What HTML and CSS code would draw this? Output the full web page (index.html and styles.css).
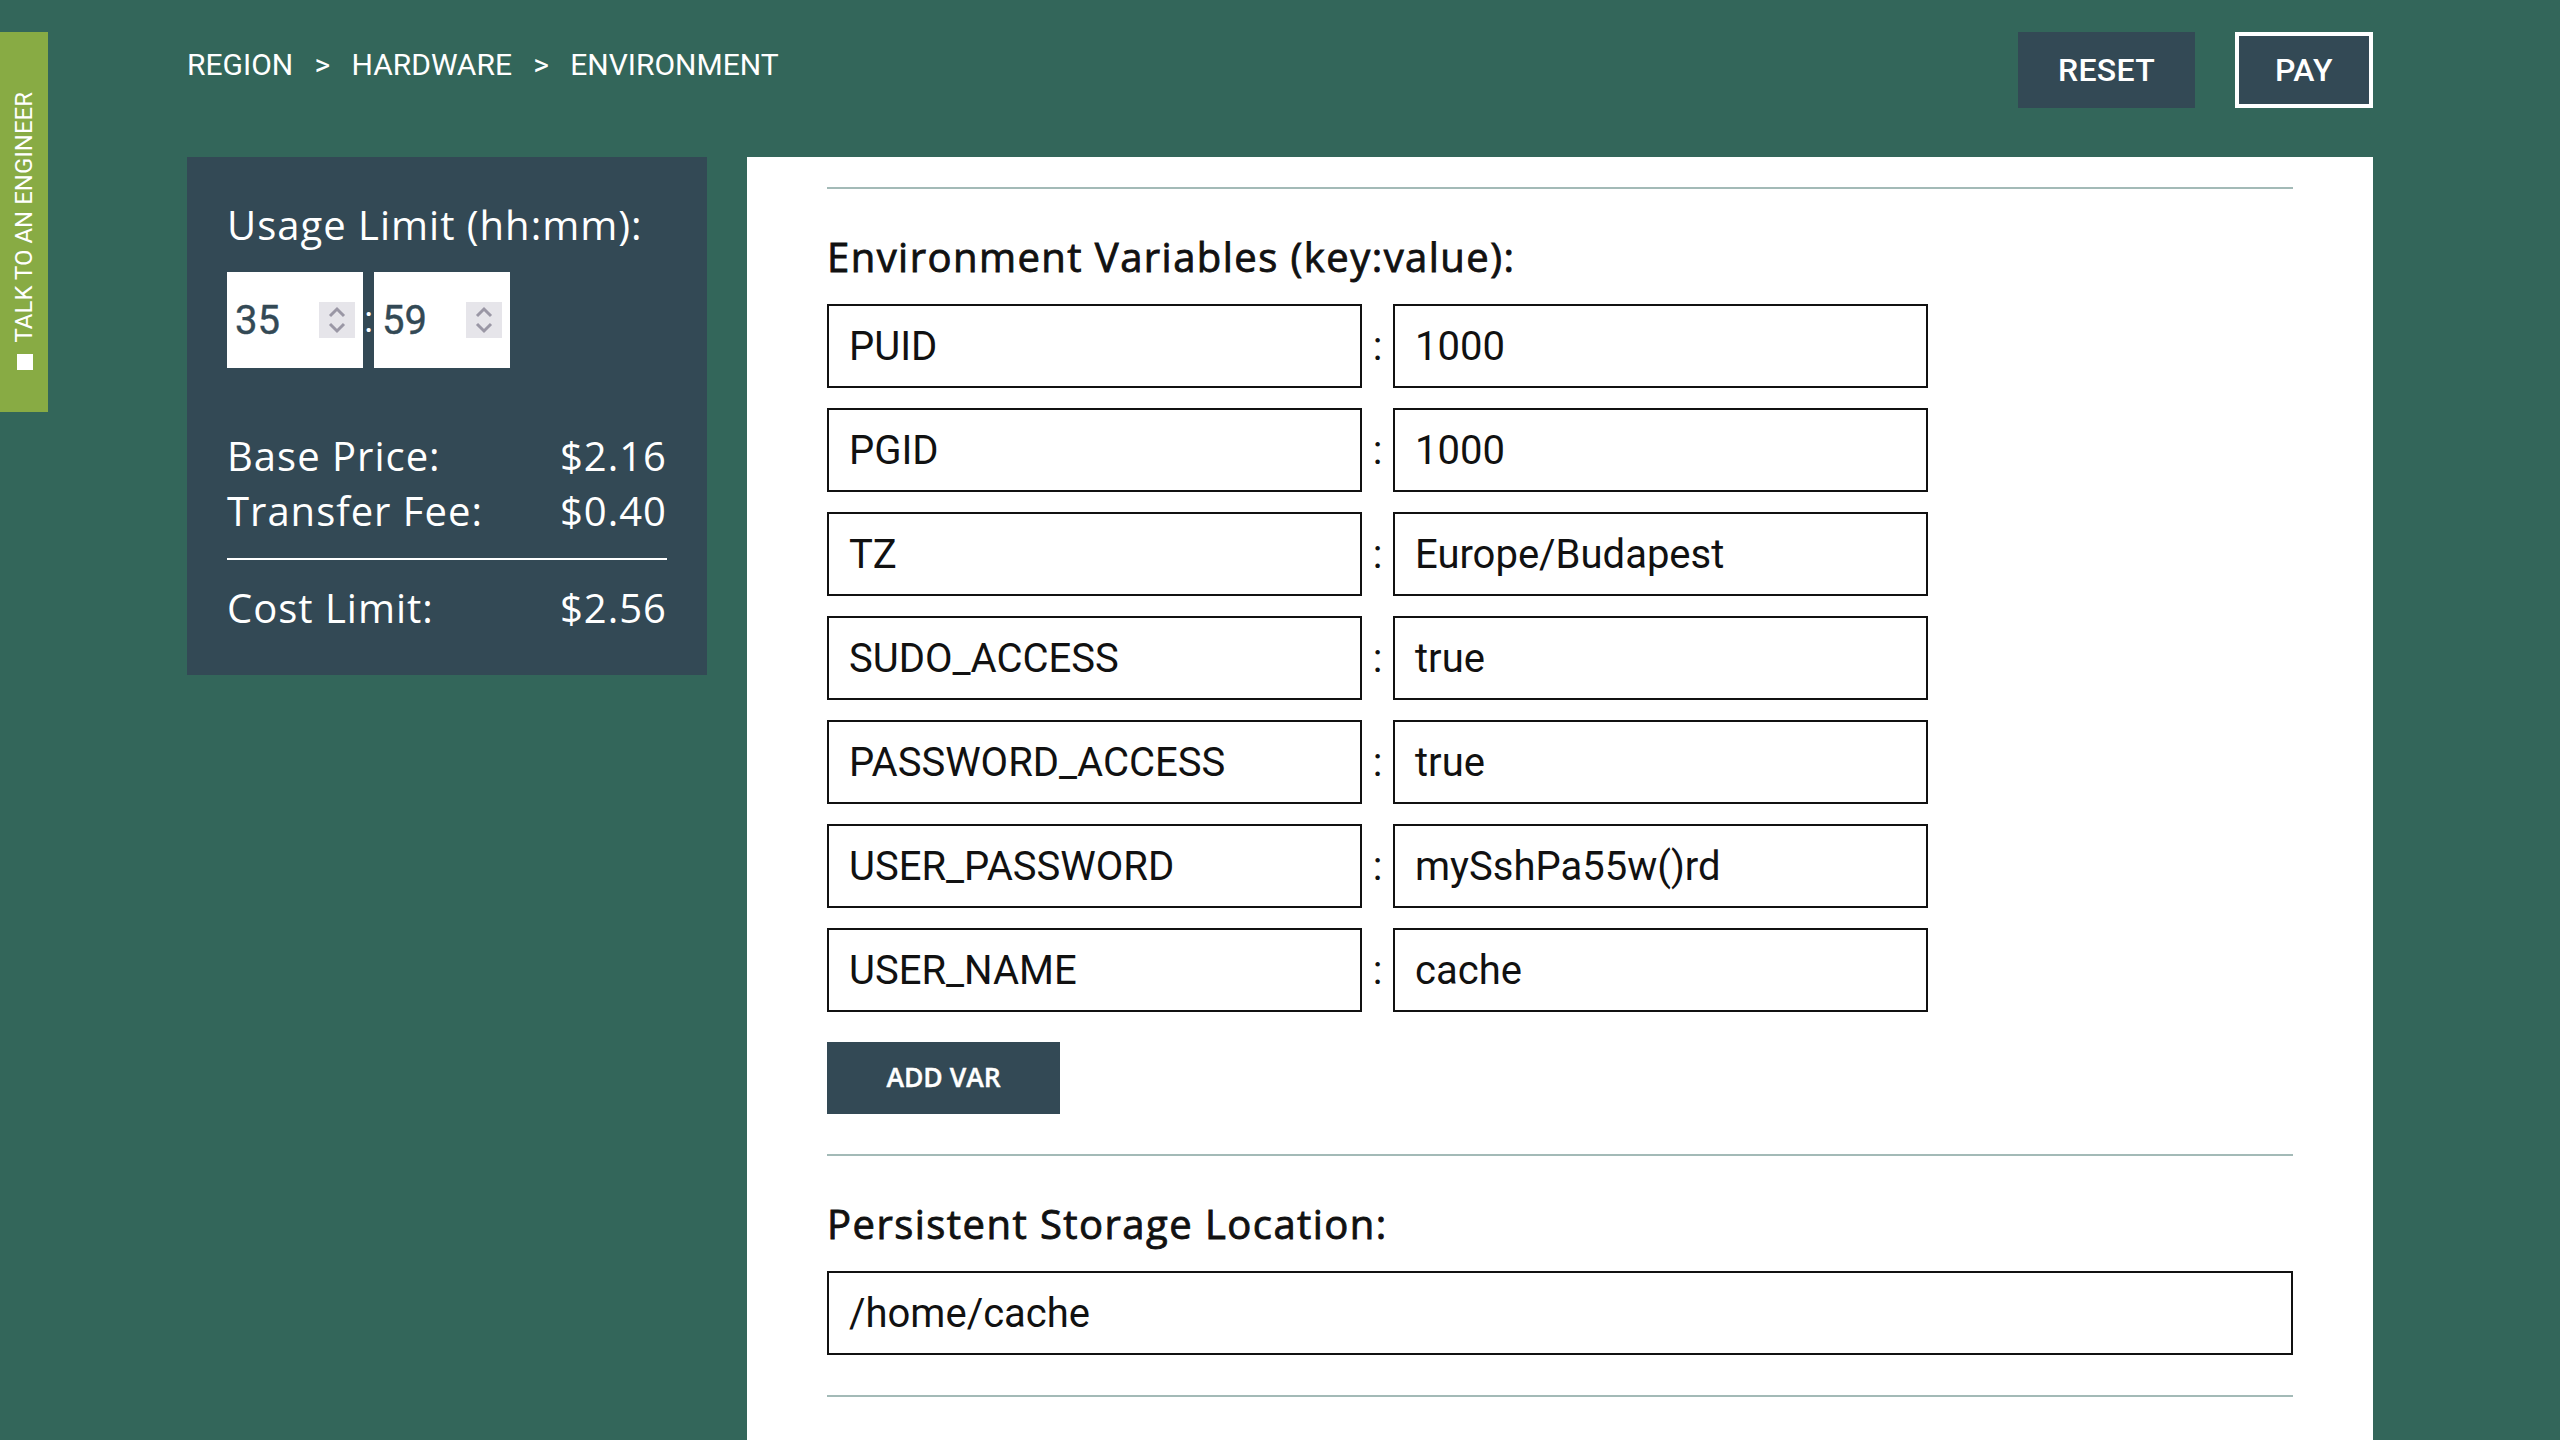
FILE: index.html
```html
<!DOCTYPE html>
<html lang="en">
<head>
<meta charset="utf-8">
<title>Environment</title>
<link rel="stylesheet" href="styles.css">
</head>
<body>
<aside class="talk-tab"><span class="talk-dot"></span><span class="talk-text">TALK TO AN ENGINEER</span></aside>
<div class="page">
  <header class="topbar">
    <nav class="crumbs"><span>REGION</span><span>&gt;</span><span>HARDWARE</span><span>&gt;</span><span>ENVIRONMENT</span></nav>
    <div class="actions">
      <button class="btn btn-reset">RESET</button>
      <button class="btn btn-pay">PAY</button>
    </div>
  </header>
  <div class="content">
    <section class="summary">
      <h2 class="summary-title">Usage Limit (hh:mm):</h2>
      <div class="time">
        <div class="num"><span>35</span><span class="spin"><svg viewBox="0 0 36 36" width="36" height="36"><path d="M11 14l7-7 7 7M11 22l7 7 7-7"/></svg></span></div>
        <span class="time-sep">:</span>
        <div class="num"><span>59</span><span class="spin"><svg viewBox="0 0 36 36" width="36" height="36"><path d="M11 14l7-7 7 7M11 22l7 7 7-7"/></svg></span></div>
      </div>
      <div class="price-row"><span>Base Price:</span><span>$2.16</span></div>
      <div class="price-row"><span>Transfer Fee:</span><span>$0.40</span></div>
      <hr class="price-line">
      <div class="price-row"><span>Cost Limit:</span><span>$2.56</span></div>
    </section>
    <main class="panel">
      <hr class="rule">
      <h3 class="label label-env">Environment Variables (key:value):</h3>
      <div class="vars">
        <div class="var"><div class="field">PUID</div><span class="sep">:</span><div class="field">1000</div></div>
        <div class="var"><div class="field">PGID</div><span class="sep">:</span><div class="field">1000</div></div>
        <div class="var"><div class="field">TZ</div><span class="sep">:</span><div class="field">Europe/Budapest</div></div>
        <div class="var"><div class="field">SUDO_ACCESS</div><span class="sep">:</span><div class="field">true</div></div>
        <div class="var"><div class="field">PASSWORD_ACCESS</div><span class="sep">:</span><div class="field">true</div></div>
        <div class="var"><div class="field">USER_PASSWORD</div><span class="sep">:</span><div class="field">mySshPa55w()rd</div></div>
        <div class="var"><div class="field">USER_NAME</div><span class="sep">:</span><div class="field">cache</div></div>
      </div>
      <button class="add-var">ADD VAR</button>
      <hr class="rule">
      <h3 class="label label-storage">Persistent Storage Location:</h3>
      <div class="field field-wide">/home/cache</div>
      <hr class="rule">
    </main>
  </div>
</div>
</body>
</html>
```
FILE: styles.css
```css
* { box-sizing: border-box; }
html, body { margin: 0; height: 1440px; overflow: hidden; }
body { background: #33665a; font-family: "Roboto", sans-serif; color: #111; }
.talk-tab {
  position: fixed; left: 0; top: 32px; width: 48px; height: 380px;
  background: #88ab44; color: #fff;
  display: flex; flex-direction: column-reverse; align-items: center; justify-content: flex-start;
  padding-bottom: 42px; gap: 11px;
}
.talk-text {
  writing-mode: vertical-rl; transform: rotate(180deg); white-space: nowrap;
  font: 400 24px/30px "Roboto", sans-serif;
}
.talk-dot { width: 16px; height: 16px; margin-left: 1px; background: #fff; flex: none; }
.page { width: 2186px; margin-left: 187px; padding-top: 32px; }
.topbar { display: flex; justify-content: space-between; align-items: flex-start; height: 76px; }
.crumbs { display: flex; gap: 21.3px; font-size: 30px; line-height: 32px; padding-top: 17px; color: #fff; }
.actions { display: flex; gap: 40px; }
.btn {
  height: 76px; border: 0; background: #334955; color: #fff;
  font: 500 32px "Roboto", sans-serif; letter-spacing: .3px; padding: 0;
}
.btn-reset { width: 177px; }
.btn-pay { width: 138px; border: 4px solid #fff; }
.content { display: flex; gap: 40px; margin-top: 49px; align-items: flex-start; }
.summary {
  width: 520px; height: 518px; background: #334955; color: #fff; padding: 42px 40px 40px;
  font-family: "Open Sans", sans-serif;
}
.summary-title { margin: 0; font-size: 40px; line-height: 52px; font-weight: 400; letter-spacing: 1px; }
.time { display: flex; align-items: center; margin: 21px 0 60px; }
.num {
  width: 136px; height: 96px; background: #fff; color: #334955;
  display: flex; align-items: center; justify-content: space-between;
  padding: 0 8px; font: 400 40px "Roboto", sans-serif; -webkit-text-stroke: .4px #334955;
}
.spin { width: 36px; height: 36px; background: #e6e5ea; display: block; }
.spin svg { display: block; fill: none; stroke: #9a97a5; stroke-width: 3; }
.time-sep { width: 11px; text-align: center; font: 400 36px "Roboto", sans-serif; }
.price-row { display: flex; justify-content: space-between; font-size: 40px; line-height: 55px; letter-spacing: 1px; }
.price-line { border: 0; height: 2px; background: #fff; margin: 20px 0; }
.panel { width: 1626px; height: 1283px; background: #fff; padding: 30px 80px; }
.rule { border: 0; height: 2px; background: #a3bab7; margin: 0; }
.label { margin: 0; font: 400 40px/48px "Open Sans", sans-serif; letter-spacing: 1.45px; -webkit-text-stroke: .85px #111; color: #111; }
.label-env { padding: 44px 0 23px; }
.label-storage { padding: 44px 0 23px; }
.vars { display: flex; flex-direction: column; gap: 20px; }
.var { display: flex; align-items: center; }
.field {
  height: 84px; border: 2px solid #111; background: #fff;
  font: 400 40px/82px "Roboto", sans-serif; padding: 0 20px; color: #111;
  width: 535px; flex: none;
}
.sep { width: 31px; flex: none; text-align: center; font: 400 40px "Roboto", sans-serif; }
.field-wide { width: 100%; margin-bottom: 40px; }
.add-var {
  display: block; width: 233px; height: 72px; margin: 30px 0 40px; border: 0;
  background: #334955; color: #fff; font: 600 26.5px "Open Sans", sans-serif; -webkit-text-stroke: .4px #fff; padding: 0 0 2px;
}
```
